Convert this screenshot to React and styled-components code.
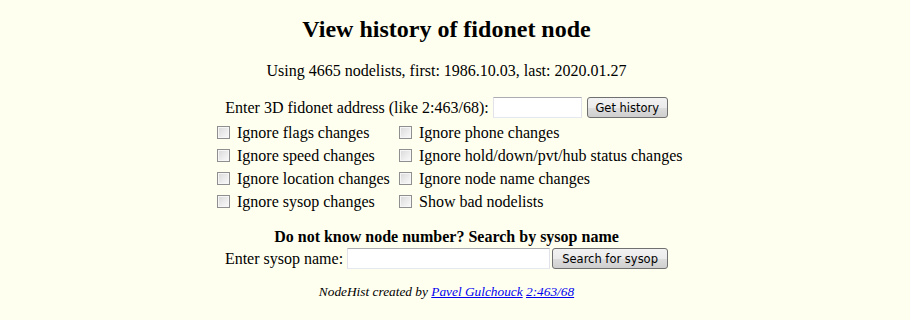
import React from "react";
import styled, { createGlobalStyle } from "styled-components";

const Global = createGlobalStyle`
  html, body { margin: 0; padding: 0; background: #ffffef; }
  body { font-family: "Liberation Serif", "Times New Roman", serif; color: #000; }
`;

const Page = styled.div`
  width: 893px;
  padding-top: 15px;
  display: flex;
  flex-direction: column;
  align-items: center;
`;

const Title = styled.h2`
  margin: 0;
  font-size: 24px;
  line-height: 28px;
  font-weight: bold;
`;

const Info = styled.p`
  margin: 19px 0 0;
  font-size: 16px;
  line-height: 18px;
`;

const Row = styled.div`
  display: flex;
  align-items: center;
  height: 21px;
  margin-top: ${(p) => p.$top}px;
  font-size: 16px;
  line-height: 18px;
`;

const TextInput = styled.input`
  box-sizing: border-box;
  width: ${(p) => p.$w}px;
  height: ${(p) => p.$h || 21}px;
  margin: 0 ${(p) => p.$gap}px 0 4px;
  padding: 1px 2px;
  border: 1px solid;
  border-color: #abadb3 #e2e3ea #e3e9ef #e2e3ea;
  background: #fff;
  font-family: "DejaVu Sans", sans-serif;
  font-size: 11px;
  outline: none;
`;

const Button = styled.button`
  box-sizing: border-box;
  width: ${(p) => p.$w}px;
  height: 21px;
  margin: 0;
  padding: 0;
  border: 1px solid #707070;
  border-radius: 3px;
  background: linear-gradient(#f2f2f2 0%, #ebebeb 50%, #dddddd 51%, #cfcfcf 100%);
  font-family: "DejaVu Sans", sans-serif;
  font-size: 11.5px;
  color: #000;
`;

const Options = styled.div`
  box-sizing: border-box;
  width: 469px;
  padding-left: 5px;
  margin-top: 3px;
  display: grid;
  grid-template-columns: 182px auto;
  grid-auto-rows: 23px;
`;

const Option = styled.label`
  display: flex;
  align-items: center;
  gap: 7px;
  font-size: 16px;
  line-height: 18px;
  white-space: nowrap;
`;

const Check = styled.input.attrs({ type: "checkbox" })`
  appearance: none;
  -webkit-appearance: none;
  box-sizing: border-box;
  width: 13px;
  height: 13px;
  margin: 0;
  border: 1px solid #8f8f8f;
  box-shadow: inset 0 0 0 1px #f6f6f6;
  background: linear-gradient(135deg, #d8d8d8 0%, #ececec 55%, #fafafa 100%);
  flex: none;
`;

const Heading = styled.div`
  margin-top: 15px;
  font-size: 16px;
  line-height: 18px;
  font-weight: bold;
`;

const Footer = styled.div`
  margin-top: 15px;
  font-size: 13.33px;
  line-height: 16px;
  font-style: italic;
`;

const Link = styled.a`
  color: #0000ee;
  text-decoration: underline;
`;

const options = [
  "Ignore flags changes",
  "Ignore phone changes",
  "Ignore speed changes",
  "Ignore hold/down/pvt/hub status changes",
  "Ignore location changes",
  "Ignore node name changes",
  "Ignore sysop changes",
  "Show bad nodelists",
];

export default function App() {
  return (
    <>
      <Global />
      <Page>
        <Title>View history of fidonet node</Title>
        <Info>Using 4665 nodelists, first: 1986.10.03, last: 2020.01.27</Info>
        <Row $top={17}>
          Enter 3D fidonet address (like 2:463/68):
          <TextInput $w={89} $gap={5} />
          <Button $w={81}>Get history</Button>
        </Row>
        <Options>
          {options.map((o) => (
            <Option key={o}>
              <Check />
              {o}
            </Option>
          ))}
        </Options>
        <Heading>Do not know node number? Search by sysop name</Heading>
        <Row $top={2}>
          Enter sysop name:
          <TextInput $w={203} $gap={2} />
          <Button $w={116}>Search for sysop</Button>
        </Row>
        <Footer>
          NodeHist created by <Link href="#">Pavel Gulchouck</Link>{" "}
          <Link href="#">2:463/68</Link>
        </Footer>
      </Page>
    </>
  );
}
